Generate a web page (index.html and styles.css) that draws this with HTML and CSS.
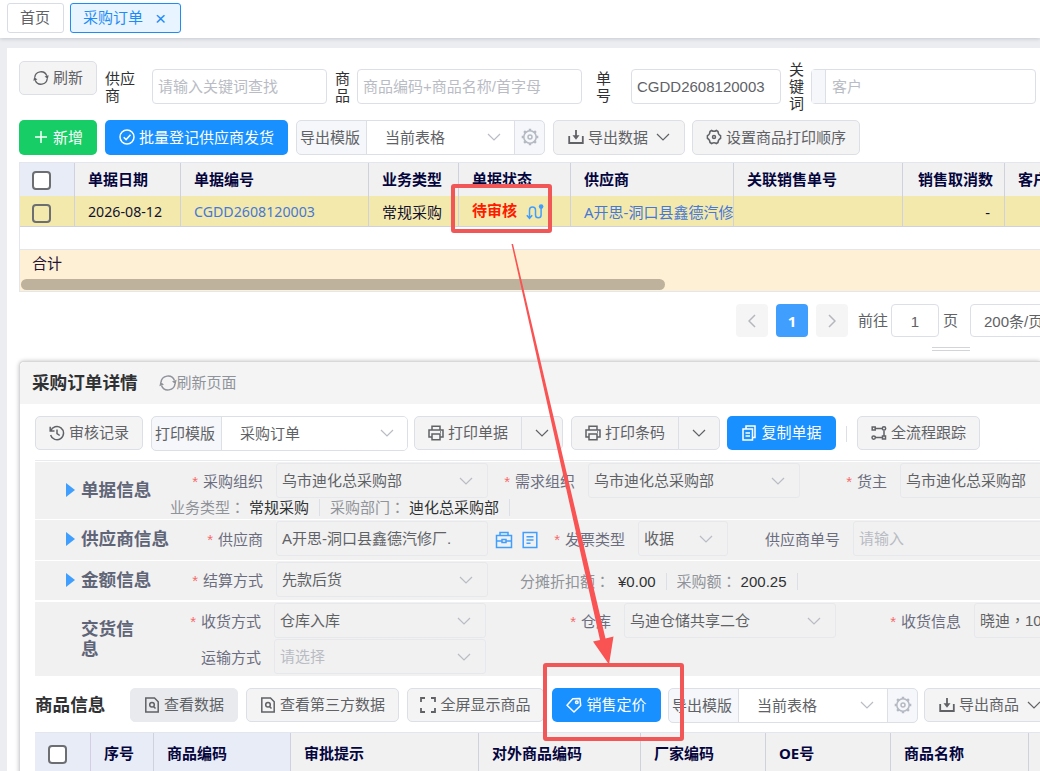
FILE: index.html
```
<!DOCTYPE html>
<html lang="zh-CN">
<head>
    <meta charset="UTF-8">
    <meta name="viewport" content="width=device-width, initial-scale=1.0">
    <title>采购订单</title>
    <link rel="stylesheet" href="styles.css">
</head>
<body>

<!-- Icons -->
<svg class="sprite">
    <symbol id="i-refresh" viewBox="0 0 18 18"><path d="M2 8.500A7 7 0 0 1 15.500 6.500M16 9.500A7 7 0 0 1 2.500 11.500"/><path d="M13 7.400l4.600-1.600-.9 4.400zM5 10.600L.4 12.200l.9-4.400z" fill="currentColor" stroke="none"/></symbol>
    <symbol id="i-plus" viewBox="0 0 16 16"><path d="M8 2v12M2 8h12"/></symbol>
    <symbol id="i-check" viewBox="0 0 16 16"><circle cx="8" cy="8" r="7"/><path d="M4.700 8.200l2.400 2.400 4.400-4.800"/></symbol>
    <symbol id="i-down" viewBox="0 0 14 8"><path d="M1 1l6 6 6-6"/></symbol>
    <symbol id="i-left" viewBox="0 0 8 14"><path d="M7 1L1 7l6 6"/></symbol>
    <symbol id="i-right" viewBox="0 0 8 14"><path d="M1 1l6 6-6 6"/></symbol>
    <symbol id="i-gear" viewBox="0 0 18 18"><circle cx="9" cy="9" r="6.200"/><circle cx="9" cy="9" r="2"/><path d="M9 .7v2.200M9 15.100v2.200M.7 9h2.200M15.100 9h2.200M3.100 3.100l1.600 1.600M13.300 13.300l1.600 1.600M14.900 3.100l-1.600 1.600M4.700 13.300l-1.600 1.600" stroke-width="2.400"/></symbol>
    <symbol id="i-nut" viewBox="0 0 16 16"><path d="M5.600 1.500Q8 3 10.400 1.500L12 2.500Q12 5.300 14.600 6.600V9.400Q12 10.700 12 13.500L10.400 14.500Q8 13 5.600 14.500L4 13.500Q4 10.700 1.400 9.400V6.600Q4 5.300 4 2.500Z"/><circle cx="8" cy="8" r="1.500"/></symbol>
    <symbol id="i-export" viewBox="0 0 16 16"><path d="M1.200 7v7h13.600V7M8 1v8" stroke-width="1.800"/><path d="M4.500 6.200h7L8 10.800z" fill="currentColor" stroke="none"/></symbol>
    <symbol id="i-route" viewBox="0 0 18 16"><path d="M3.500 14V6a3 3 0 0 1 6 0v5a2.800 2.800 0 0 0 5.600 0V4M.8 11.300l2.700 3 2.700-3"/><circle cx="15.100" cy="2.600" r="2.300" fill="currentColor" stroke="none"/></symbol>
    <symbol id="i-history" viewBox="0 0 16 16"><path d="M1.700 6A6.600 6.600 0 1 1 1.600 10M1.200 1.800v4.300h4.300M8 4.500V8.500l2.700 2"/></symbol>
    <symbol id="i-print" viewBox="0 0 16 16"><path d="M4 5V1.200h8V5M4 12H1V5h14v7h-3M4 9h8v5.800H4zM12 7h1"/></symbol>
    <symbol id="i-copy" viewBox="0 0 16 16"><path d="M5 4V1h9v11.500H11.500M2 4H11.500v11H2zM4.500 8h4.500M4.500 11h4.500"/></symbol>
    <symbol id="i-flow" viewBox="0 0 16 16"><path d="M1.200 2h3v3h-3zM11.500 11h3v3h-3zM4.500 3.400h7M5 12.600h6.500M13 5.500V11"/><circle cx="13" cy="3.400" r="1.700"/><circle cx="2.700" cy="12.600" r="1.700"/></symbol>
    <symbol id="i-doc" viewBox="0 0 16 16"><path d="M1.800 1h8.700l3.700 3.700V15H1.800zM9.500 9.500l2 2"/><circle cx="8" cy="7.700" r="2.300"/></symbol>
    <symbol id="i-full" viewBox="0 0 16 16"><path d="M1 5V1h4M11 1h4v4M15 11v4h-4M5 15H1v-4" stroke-width="1.800"/></symbol>
    <symbol id="i-tag" viewBox="0 0 16 16"><path d="M1 8.200L6.800 1.800l7.200-.3.700 7L8 15z" stroke-linejoin="round"/><circle cx="10.800" cy="5.200" r="1.300"/></symbol>
    <symbol id="i-case" viewBox="0 0 18 18"><path d="M5 4.500V1.500h8v3M1.500 4.500h15v12h-15zM1.500 10H7M11 10h5.500M7 8.500h4v3H7z"/></symbol>
    <symbol id="i-form" viewBox="0 0 16 18"><path d="M1.200 1.500h13.600v15H1.200zM4.500 5.800h7M4.500 9h7M4.500 12.200h4"/></symbol>
</svg>

<div class="tabs">
    <div class="tab">首页</div>
    <div class="tab active">采购订单 <span class="close">×</span></div>
</div>

<div class="page">
    <div class="filters">
        <button class="btn refresh"><svg><use href="#i-refresh"/></svg>刷新</button>
        <label class="l-supplier">供应商</label>
        <div class="input w-supplier ph">请输入关键词查找</div>
        <label class="l-goods">商品</label>
        <div class="input w-goods ph">商品编码+商品名称/首字母</div>
        <label class="l-no">单号</label>
        <div class="input w-no">CGDD2608120003</div>
        <label class="l-key">关键词</label>
        <div class="input w-key ph"><i></i>客户</div>
    </div>

    <div class="toolbar">
        <button class="btn green"><svg><use href="#i-plus"/></svg>新增</button>
        <button class="btn blue w183"><svg><use href="#i-check"/></svg>批量登记供应商发货</button>
        <div class="group">
            <span class="prefix">导出模版</span>
            <div class="pick">当前表格<svg class="down"><use href="#i-down"/></svg></div>
            <span class="gear"><svg><use href="#i-gear"/></svg></span>
        </div>
        <button class="btn w132"><svg><use href="#i-export"/></svg>导出数据<svg class="down"><use href="#i-down"/></svg></button>
        <button class="btn w168"><svg><use href="#i-nut"/></svg>设置商品打印顺序</button>
    </div>

    <div class="orders">
        <div class="tr th">
            <div class="check"><b></b></div>
            <div>单据日期</div>
            <div>单据编号</div>
            <div>业务类型</div>
            <div>单据状态</div>
            <div>供应商</div>
            <div>关联销售单号</div>
            <div class="right">销售取消数</div>
            <div>客户</div>
        </div>
        <div class="tr row">
            <div class="check"><b></b></div>
            <div class="num">2026-08-12</div>
            <div class="num link">CGDD2608120003</div>
            <div>常规采购</div>
            <div class="status">待审核<svg><use href="#i-route"/></svg></div>
            <div class="link">A开思-洞口县鑫德汽修厂</div>
            <div></div>
            <div class="right">-</div>
            <div></div>
        </div>
        <div class="blank"></div>
        <div class="sum">合计<div class="scroll"></div></div>
    </div>

    <div class="pager">
        <button class="pg"><svg><use href="#i-left"/></svg></button>
        <button class="pg on">1</button>
        <button class="pg"><svg><use href="#i-right"/></svg></button>
        <span class="goto">前往</span>
        <div class="pg-input">1</div>
        <span class="unit">页</span>
        <div class="pg-size">200条/页</div>
    </div>
    <div class="drag"></div>

    <div class="detail">
        <div class="detail-head">
            <h2>采购订单详情</h2>
            <span><svg><use href="#i-refresh"/></svg>刷新页面</span>
        </div>

        <div class="detail-body">
            <div class="toolbar detail-bar">
                <button class="btn w108"><svg><use href="#i-history"/></svg>审核记录</button>
                <div class="group tpl">
                    <span class="prefix">打印模版</span>
                    <div class="pick">采购订单<svg class="down"><use href="#i-down"/></svg></div>
                </div>
                <div class="split">
                    <button class="btn w108"><svg><use href="#i-print"/></svg>打印单据</button>
                    <button class="btn arrow"><svg class="down"><use href="#i-down"/></svg></button>
                </div>
                <div class="split second">
                    <button class="btn w108"><svg><use href="#i-print"/></svg>打印条码</button>
                    <button class="btn arrow"><svg class="down"><use href="#i-down"/></svg></button>
                </div>
                <button class="btn blue w109"><svg><use href="#i-copy"/></svg>复制单据</button>
                <i class="bar"></i>
                <button class="btn w123"><svg><use href="#i-flow"/></svg>全流程跟踪</button>
            </div>

            <section class="s-base">
                <h3 class="fold">单据信息</h3>
                <div class="form">
                    <div class="line">
                        <label class="req">采购组织</label>
                        <div class="field">乌市迪化总采购部<svg class="down"><use href="#i-down"/></svg></div>
                        <label class="req">需求组织</label>
                        <div class="field">乌市迪化总采购部<svg class="down"><use href="#i-down"/></svg></div>
                        <label class="req">货主</label>
                        <div class="field">乌市迪化总采购部</div>
                    </div>
                    <div class="facts">
                        <span>业务类型<span class="mid" lang="zh-TW">：</span></span><em>常规采购</em><i></i>
                        <span>采购部门<span class="mid" lang="zh-TW">：</span></span><em>迪化总采购部</em><i></i>
                    </div>
                </div>
            </section>

            <section class="s-supplier">
                <h3 class="fold">供应商信息</h3>
                <div class="form line">
                    <label class="req">供应商</label>
                    <div class="field">A开思-洞口县鑫德汽修厂.</div>
                    <svg class="blue-icon"><use href="#i-case"/></svg>
                    <svg class="blue-icon"><use href="#i-form"/></svg>
                    <label class="req l-bill">发票类型</label>
                    <div class="field w-bill">收据<svg class="down"><use href="#i-down"/></svg></div>
                    <label class="l-sno">供应商单号</label>
                    <div class="field ph">请输入</div>
                </div>
            </section>

            <section class="s-money">
                <h3 class="fold">金额信息</h3>
                <div class="form line">
                    <label class="req">结算方式</label>
                    <div class="field">先款后货<svg class="down"><use href="#i-down"/></svg></div>
                    <div class="facts">
                        <span>分摊折扣额<span class="mid" lang="zh-TW">：</span></span><em class="first">¥0.00</em><i></i>
                        <span>采购额<span class="mid" lang="zh-TW">：</span></span><em>200.25</em><i></i>
                    </div>
                </div>
            </section>

            <section class="s-ship">
                <h3>交货信息</h3>
                <div class="form">
                    <div class="line">
                        <label class="req">收货方式</label>
                        <div class="field">仓库入库<svg class="down"><use href="#i-down"/></svg></div>
                        <label class="req l-wide">仓库</label>
                        <div class="field">乌迪仓储共享二仓<svg class="down"><use href="#i-down"/></svg></div>
                        <label class="req l-wide">收货信息</label>
                        <div class="field"><span>晓迪<span class="mid" lang="zh-TW">，</span>10</span></div>
                    </div>
                    <div class="line">
                        <label>运输方式</label>
                        <div class="field ph">请选择<svg class="down"><use href="#i-down"/></svg></div>
                    </div>
                </div>
            </section>

            <div class="toolbar goods-bar">
                <h4>商品信息</h4>
                <button class="btn grey w108"><svg><use href="#i-doc"/></svg>查看数据</button>
                <button class="btn w153"><svg><use href="#i-doc"/></svg>查看第三方数据</button>
                <button class="btn w137"><svg><use href="#i-full"/></svg>全屏显示商品</button>
                <button class="btn blue w109"><svg><use href="#i-tag"/></svg>销售定价</button>
                <div class="group">
                    <span class="prefix">导出模版</span>
                    <div class="pick">当前表格<svg class="down"><use href="#i-down"/></svg></div>
                    <span class="gear"><svg><use href="#i-gear"/></svg></span>
                </div>
                <button class="btn w132"><svg><use href="#i-export"/></svg>导出商品<svg class="down"><use href="#i-down"/></svg></button>
            </div>

            <div class="goods th">
                <div class="check"><b></b></div>
                <div>序号</div>
                <div>商品编码</div>
                <div>审批提示</div>
                <div>对外商品编码</div>
                <div>厂家编码</div>
                <div>OE号</div>
                <div>商品名称</div>
                <div></div>
            </div>
        </div>
    </div>
</div>

<!-- Guide marks over the page -->
<svg class="marks" viewBox="0 0 1040 771">
    <rect x="453" y="186" width="97" height="45" rx="1"/>
    <rect x="545" y="665" width="137" height="74" rx="1"/>
    <polygon points="511.500,244 513,244 605.500,638.500 613.500,636.500 609,664.500 593,641.500 600,640"/>
</svg>

</body>
</html>
```
FILE: styles.css
```
/* Base Styles */
* {
    box-sizing: border-box;
}
body {
    margin: 0;
    width: 1040px;
    height: 771px;
    overflow: hidden;
    position: relative;
    background: #ebedf0;
    font-family: "Liberation Sans", "Noto Sans CJK SC", sans-serif;
    font-size: 15px;
    line-height: 20px;
    color: #606266;
    white-space: nowrap;
}
svg {
    fill: none;
    stroke: currentColor;
    stroke-width: 1.5;
    flex: none;
}
.sprite {
    display: none;
}
h2, h3, h4 {
    margin: 0;
}
i, em {
    font-style: normal;
}

/* Tabs */
.tabs {
    display: flex;
    gap: 6px;
    height: 38px;
    padding: 3px 7px;
    background: #fff;
    box-shadow: 0 1px 4px rgba(0, 21, 41, 0.16);
}
.tab {
    height: 30px;
    width: 57px;
    padding-left: 12px;
    line-height: 28px;
    border: 1px solid #d8dce5;
    border-radius: 3px;
}
.tab.active {
    display: flex;
    width: 111px;
    color: #1f8cf5;
    background: #e8f4ff;
    border-color: #1f8cf5;
}
.close {
    margin-left: 12px;
    font-size: 19px;
    line-height: 30px;
}

/* Page */
.page {
    height: 723px;
    margin: 10px 0 0 7px;
    padding: 13px 0 0 12px;
    overflow: hidden;
    background: #fff;
}
.filters {
    display: flex;
    align-items: center;
    height: 51px;
    margin-bottom: 8px;
}
.filters label {
    white-space: normal;
    word-break: break-all;
    line-height: 17px;
    color: #303133;
}
.l-supplier {
    width: 31px;
    margin: 0 16px 0 8px;
}
.l-goods {
    width: 15px;
    margin: 0 7px 0 8px;
}
.l-no {
    width: 15px;
    margin: 0 20px 0 14px;
}
.l-key {
    width: 15px;
    margin: 0 7px 0 8px;
}
.input {
    display: flex;
    height: 35px;
    padding-left: 5px;
    line-height: 33px;
    border: 1px solid #dcdfe6;
    border-radius: 4px;
    background: #fff;
}
.ph {
    color: #b9bcc4;
}
.w-supplier { width: 175px; }
.w-goods { width: 225px; }
.w-no { width: 150px; }
.w-key {
    width: 225px;
    padding: 0;
}
.w-key i {
    width: 14px;
    margin-right: 6px;
    background: #f5f7fa;
    border-right: 1px solid #dcdfe6;
}

/* Buttons */
.btn {
    display: flex;
    justify-content: center;
    align-items: center;
    gap: 4px;
    height: 34px;
    padding: 0;
    font: inherit;
    color: #606266;
    background: #f4f4f5;
    border: 1px solid #dcdfe6;
    border-radius: 5px;
}
.btn svg {
    width: 16px;
    height: 16px;
    margin-top: -1px;
}
.btn.refresh {
    width: 78px;
    align-self: flex-start;
}
.btn.green {
    width: 78px;
    color: #fff;
    background: #17ce66;
    border: none;
}
.btn.blue {
    color: #fff;
    background: #1890ff;
    border: none;
}
.btn.grey {
    background: #e8eaed;
    border-color: #e8eaed;
}
.btn svg.down {
    width: 14px;
    height: 8px;
    margin-left: 4px;
    stroke-width: 1.2;
}
.w108 { width: 108px; }
.w109 { width: 109px; }
.w123 { width: 123px; }
.w132 { width: 132px; }
.w137 { width: 137px; }
.w153 { width: 153px; }
.w168 {
    width: 168px;
    margin-left: -1px;
}
.w183 { width: 183px; }

.toolbar {
    display: flex;
    gap: 8px;
    height: 35px;
}
.toolbar > .btn {
    flex: none;
    height: 35px;
}
.group {
    display: flex;
    flex: none;
    width: 249px;
    height: 35px;
    line-height: 33px;
    border: 1px solid #dcdfe6;
    border-radius: 5px;
    overflow: hidden;
    background: #f5f7fa;
}
.prefix {
    width: 69px;
    padding-left: 3px;
}
.pick {
    display: flex;
    justify-content: space-between;
    align-items: center;
    flex: 1;
    padding: 0 13px 0 18px;
    background: #fff;
    border-left: 1px solid #dcdfe6;
}
.down {
    width: 14px;
    height: 8px;
    stroke-width: 1.2;
}
.pick .down {
    margin-top: -2px;
    color: #b9bcc4;
}
.gear {
    display: flex;
    justify-content: center;
    align-items: center;
    width: 30px;
    color: #b4b9c2;
    border-left: 1px solid #dcdfe6;
}
.gear svg {
    width: 18px;
    height: 18px;
    margin-top: -2px;
}

/* Orders table */
.orders {
    height: 130px;
    margin-top: 7px;
    border: 1px solid #e4e6ee;
    border-right: none;
    overflow: hidden;
}
.tr {
    display: grid;
    width: 1190px;
    grid-template-columns: 55px 106px 188px 90px 112px 163px 169px 102px 200px;
}
.th > div, .row > div {
    display: flex;
    align-items: center;
    padding-left: 13px;
    overflow: hidden;
    border-right: 1px solid #d0d1df;
}
.tr.th {
    height: 33px;
}
.th > div {
    font-family: "Noto Sans", "Noto Sans CJK SC", sans-serif;
    font-weight: bold;
    color: #05053d;
    background: #f1f1f2;
    padding-bottom: 1px;
}
.th > .check {
    background: #e8ecf6;
}
.th > .check, .row > .check {
    padding: 2px 0 0 12px;
}
.check b {
    width: 19px;
    height: 19px;
    border: 2px solid #6c6e72;
    border-radius: 4px;
    background: #fff;
}
.row > .check b {
    margin-top: 2px;
    background: none;
}
.row {
    height: 31px;
    color: #111130;
    background: #f4e9ad;
    border-bottom: 1px solid #d0d1df;
}
.row > div {
    padding-top: 2px;
    font-family: "Noto Sans", "Noto Sans CJK SC", sans-serif;
}
.row > .num {
    font-size: 14.2px;
}
.row > .link {
    color: #4678d5;
}
.row > .status {
    gap: 9px;
    padding-top: 0;
    padding-bottom: 3px;
    font-weight: bold;
    color: #ff1a00;
}
.status svg {
    width: 18px;
    height: 16px;
    margin-top: 4px;
    color: #409eff;
}
.tr > .right {
    justify-content: flex-end;
    padding-right: 11px;
}
.row > .right {
    padding-right: 14px;
}
.blank {
    height: 22px;
}
.sum {
    height: 43px;
    padding: 4px 0 0 12px;
    color: #231437;
    background: #fef0d4;
    border-top: 1px solid #e4e6ee;
}
.scroll {
    width: 644px;
    height: 11px;
    margin: 5px 0 0 -11px;
    border-radius: 6px;
    background: #bfb29d;
}

/* Pager */
.pager {
    display: flex;
    gap: 8px;
    height: 33px;
    margin: 12px 0 0 717px;
    line-height: 33px;
}
.pg {
    flex: none;
    display: flex;
    justify-content: center;
    align-items: center;
    width: 32px;
    padding: 0;
    border: none;
    border-radius: 4px;
    background: #f5f5f6;
    color: #b4b7bd;
}
.pg svg {
    width: 8px;
    height: 14px;
}
.pg.on {
    font: bold 15px "Noto Sans", sans-serif;
    color: #fff;
    background: #409eff;
}
.goto {
    margin: 0 -5px 0 2px;
}
.pg-input {
    flex: none;
    width: 48px;
    text-align: center;
    border: 1px solid #dcdfe6;
    border-radius: 4px;
}
.unit {
    margin: 0 4px 0 -4px;
}
.pg-size {
    width: 120px;
    flex: none;
    padding-left: 13px;
    border: 1px solid #dcdfe6;
    border-radius: 4px;
}
.drag {
    width: 38px;
    height: 4px;
    margin: 10px 0 0 913px;
    border: solid #d2d4d8;
    border-width: 1px 0;
}

/* Detail */
.detail {
    height: 420px;
    margin-top: 10px;
    border-top: 1px solid #d8d8da;
    border-left: 1px solid #d8d8da;
    border-radius: 5px 0 0 0;
    box-shadow: 0 0 4px rgba(0, 0, 0, 0.25);
    background: #fff;
}
.detail-head {
    display: flex;
    align-items: center;
    gap: 20px;
    height: 42px;
    padding-left: 12px;
    color: #909399;
    background: #f4f4f5;
    border-radius: 5px 0 0 0;
}
.detail-head h2 {
    font-size: 17.6px;
    color: #303133;
}
.detail-head span {
    display: flex;
    align-items: center;
}
.detail-head svg {
    width: 18px;
    height: 18px;
    margin-left: 1px;
}
.detail-body {
    padding: 12px 0 0 15px;
}
.detail-bar {
    height: 45px;
    border-bottom: 1px solid #e9eaee;
    margin-bottom: 1px;
}
.detail-bar > .btn, .goods-bar > .btn {
    height: 34px;
}
.tpl {
    width: 257px;
}
.split {
    display: flex;
    flex: none;
    margin-left: -2px;
}
.split.second {
    margin-left: 0;
    margin-right: -1px;
}
.split .btn:first-child {
    border-radius: 5px 0 0 5px;
}
.split .arrow {
    width: 42px;
    margin-left: -1px;
    border-radius: 0 5px 5px 0;
}
.split .btn.arrow svg {
    margin-left: 0;
}
.bar {
    width: 1px;
    height: 16px;
    margin: 10px 2px 0;
    background: #dcdfe6;
}

/* Form sections */
section {
    display: flex;
    margin-bottom: 1px;
    background: #f1f1f1;
    color: #6c6e80;
}
section h3 {
    width: 134px;
    flex: none;
    padding: 0 0 2px 46px;
    font-size: 17.6px;
    color: #5f6577;
    white-space: normal;
    align-self: center;
}
.fold {
    display: flex;
    align-items: center;
    white-space: nowrap;
}
section h3.fold {
    padding-left: 31px;
}
.fold::before {
    content: "";
    margin-right: 6px;
    border: 7px solid transparent;
    border-left: 9px solid #409eff;
    border-right: none;
}
.form {
    flex: 1;
    min-width: 0;
    overflow: hidden;
}
.line {
    display: flex;
    align-items: center;
    padding-left: 7px;
}
.line label {
    width: 100px;
    flex: none;
    padding: 3px 13px 0 0;
    text-align: right;
}
.req::before {
    content: "*";
    margin-right: 5px;
    color: #f56c6c;
}
.field {
    display: flex;
    align-items: center;
    justify-content: space-between;
    flex: none;
    width: 212px;
    height: 35px;
    padding: 0 14px 0 5px;
    color: #606266;
    border: 1px solid #e7e8eb;
    border-radius: 3px;
}
.field.ph {
    color: #b9bcc4;
}
.field .down {
    color: #b9bcc4;
}
.facts {
    display: flex;
    align-items: center;
    color: #909399;
}
.mid {
    font-family: "Noto Sans CJK TC", sans-serif;
    line-height: 1;
}
.facts em {
    color: #303133;
}
.facts i {
    width: 1px;
    height: 17px;
    margin: 0 10px;
    background: #dcdfe6;
}
.s-base {
    height: 57px;
}
.s-base .line {
    padding-top: 1px;
}
.s-base .facts {
    height: 17px;
    margin: 1px 0 0 1px;
}
.s-base .facts em {
    margin-left: 4px;
}
.s-supplier {
    height: 40px;
}
.s-money {
    height: 39px;
    margin-bottom: 2px;
}
.s-supplier .line, .s-money .line {
    align-self: flex-start;
    margin-top: 1px;
}
.s-money .facts {
    margin-left: 32px;
    padding-top: 4px;
}
.s-money em {
    margin-left: 4px;
}
.s-money .first {
    margin-left: 8px;
}
.blue-icon {
    width: 18px;
    height: 18px;
    margin: 2px 1px 0 7px;
    color: #409eff;
}
.line .l-bill {
    width: 98px;
}
.w-bill { width: 90px; }
.line .l-sno {
    width: 125px;
}
.s-ship {
    height: 74px;
    margin-bottom: 12px;
}
.s-ship h3 {
    padding-right: 30px;
    padding-bottom: 0;
}
.s-ship .line {
    padding-left: 5px;
    margin: 1px 0;
}
.s-ship .line .l-wide {
    width: 138px;
}

/* Goods */
.goods-bar h4 {
    width: 87px;
    flex: none;
    font-size: 17.6px;
    line-height: 34px;
    color: #303133;
}
.goods-bar .group {
    width: 250px;
    margin-left: -1px;
}
.goods-bar .group + .btn {
    margin-left: -2px;
}
.goods {
    display: grid;
    width: 1100px;
    grid-template-columns: 56px 63px 137px 188px 162px 125px 125px 138px 100px;
    height: 46px;
    margin-top: 9px;
    border-top: 1px solid #e4e6ee;
}
.goods > div {
    padding-bottom: 5px;
}
.goods > .check {
    padding: 0 0 2px 13px;
}
.goods > div:nth-child(-n+3) {
    background: #e8ecf6;
}

/* Guide marks */
.marks {
    position: absolute;
    top: 0;
    left: 0;
    width: 1040px;
    height: 771px;
    pointer-events: none;
}
.marks rect {
    stroke: #f15757;
    stroke-width: 4;
}
.marks polygon {
    fill: #f95353;
    stroke: none;
}
```
